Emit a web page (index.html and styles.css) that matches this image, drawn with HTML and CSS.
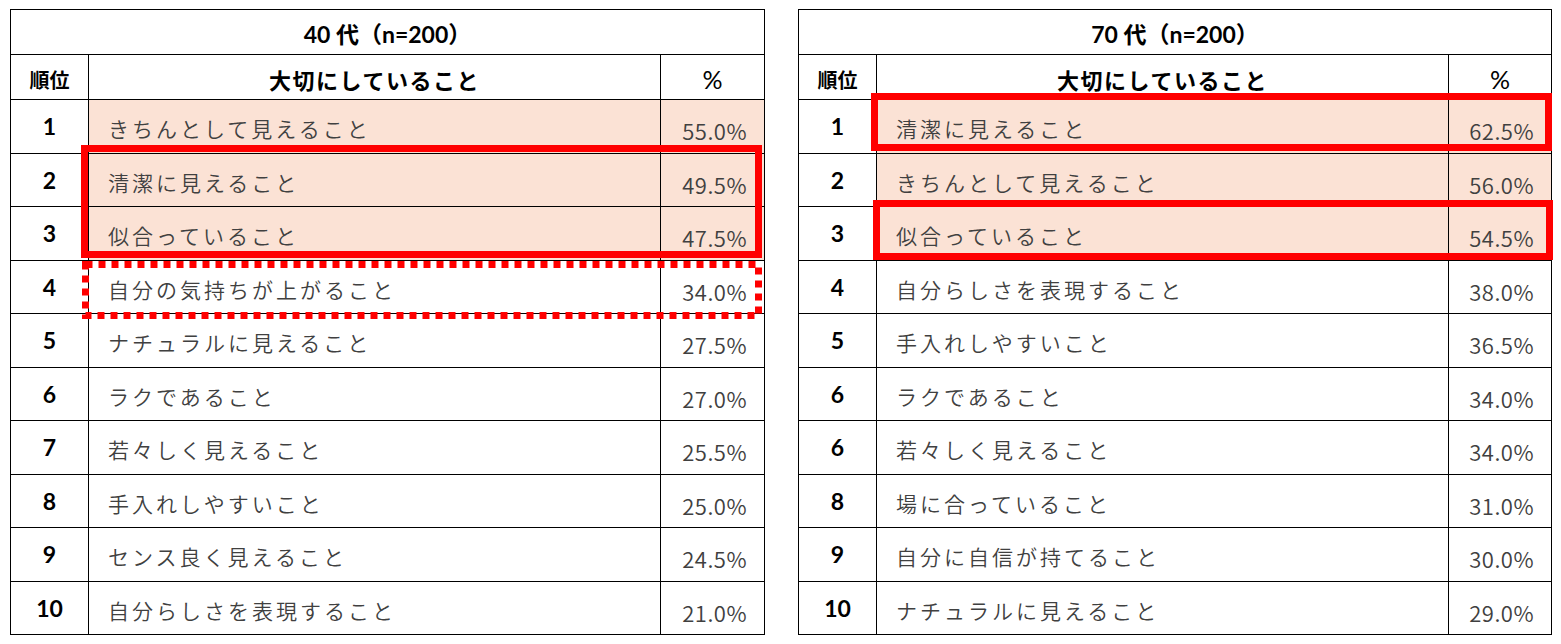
FILE: index.html
```html
<!DOCTYPE html>
<html lang="ja">
<head>
<meta charset="utf-8">
<title>大切にしていること</title>
<link rel="stylesheet" href="styles.css">
</head>
<body>
<div class="page">
  <div class="tables">
    <div class="tbl tbl-left">
      <div class="title">40 代（n=200）</div>
      <div class="hd hd-rank">順位</div>
      <div class="hd hd-item">大切にしていること</div>
      <div class="hd hd-pct">%</div>

      <div class="rank">1</div><div class="item hl">きちんとして見えること</div><div class="pct hl">55.0%</div>
      <div class="rank">2</div><div class="item hl">清潔に見えること</div><div class="pct hl">49.5%</div>
      <div class="rank">3</div><div class="item hl">似合っていること</div><div class="pct hl">47.5%</div>
      <div class="rank">4</div><div class="item">自分の気持ちが上がること</div><div class="pct">34.0%</div>
      <div class="rank">5</div><div class="item">ナチュラルに見えること</div><div class="pct">27.5%</div>
      <div class="rank">6</div><div class="item">ラクであること</div><div class="pct">27.0%</div>
      <div class="rank">7</div><div class="item">若々しく見えること</div><div class="pct">25.5%</div>
      <div class="rank">8</div><div class="item">手入れしやすいこと</div><div class="pct">25.0%</div>
      <div class="rank">9</div><div class="item">センス良く見えること</div><div class="pct">24.5%</div>
      <div class="rank">10</div><div class="item">自分らしさを表現すること</div><div class="pct">21.0%</div>
    </div>

    <div class="tbl tbl-right">
      <div class="title">70 代（n=200）</div>
      <div class="hd hd-rank">順位</div>
      <div class="hd hd-item">大切にしていること</div>
      <div class="hd hd-pct">%</div>

      <div class="rank">1</div><div class="item hl">清潔に見えること</div><div class="pct hl">62.5%</div>
      <div class="rank">2</div><div class="item hl">きちんとして見えること</div><div class="pct hl">56.0%</div>
      <div class="rank">3</div><div class="item hl">似合っていること</div><div class="pct hl">54.5%</div>
      <div class="rank">4</div><div class="item">自分らしさを表現すること</div><div class="pct">38.0%</div>
      <div class="rank">5</div><div class="item">手入れしやすいこと</div><div class="pct">36.5%</div>
      <div class="rank">6</div><div class="item">ラクであること</div><div class="pct">34.0%</div>
      <div class="rank">6</div><div class="item">若々しく見えること</div><div class="pct">34.0%</div>
      <div class="rank">8</div><div class="item">場に合っていること</div><div class="pct">31.0%</div>
      <div class="rank">9</div><div class="item">自分に自信が持てること</div><div class="pct">30.0%</div>
      <div class="rank">10</div><div class="item">ナチュラルに見えること</div><div class="pct">29.0%</div>
    </div>
  </div>

  <div class="mark mark-l23"></div>
  <svg class="mark-dash" width="680" height="58" viewBox="0 0 680 58">
    <rect x="3.5" y="3.5" width="673" height="51" fill="none" stroke="#ff0000" stroke-width="7" stroke-dasharray="7 6"/>
  </svg>
  <div class="mark mark-r1"></div>
  <div class="mark mark-r3"></div>
</div>
</body>
</html>
```

FILE: styles.css
```css
html, body {
  margin: 0;
  padding: 0;
  background: #ffffff;
}

.page {
  position: relative;
  width: 1561px;
  height: 644px;
  overflow: hidden;
}

.tables {
  display: flex;
  gap: 33px;
  padding: 9px 0 0 10px;
  align-items: flex-start;
}

.tbl {
  display: grid;
  grid-template-rows: 45px 45px repeat(10, 53.5px);
  border-left: 1px solid #000;
  border-top: 1px solid #000;
  font-family: "Noto Sans CJK JP", sans-serif;
}

.tbl-left {
  grid-template-columns: 78px 572px 104px;
}

.tbl-right {
  grid-template-columns: 78px 572px 103px;
}

.tbl > div {
  box-sizing: border-box;
  border-right: 1px solid #000;
  border-bottom: 1px solid #000;
  display: flex;
  align-items: center;
}

.title {
  grid-column: 1 / 4;
  justify-content: center;
  font-family: Lato, "Noto Sans CJK JP", sans-serif;
  font-weight: 700;
  font-size: 23px;
  color: #000;
  padding-top: 2px;
}

.hd {
  font-weight: 700;
  color: #000;
  justify-content: center;
}

.hd-rank {
  font-size: 20px;
  padding-top: 4px;
}

.hd-item {
  font-size: 22px;
  letter-spacing: 1.5px;
  padding-top: 4px;
}

.hd-pct {
  font-family: Lato, sans-serif;
  font-weight: 400;
  font-size: 25px;
  padding-top: 4px;
}

.rank {
  justify-content: center;
  font-family: Lato, sans-serif;
  font-weight: 700;
  font-size: 23px;
  color: #000;
}

.item {
  padding-left: 19px;
  padding-top: 4px;
  font-size: 21px;
  font-weight: 350;
  letter-spacing: 3px;
  color: #404040;
  white-space: nowrap;
}

.pct {
  justify-content: flex-end;
  padding-right: 17px;
  padding-top: 8px;
  font-size: 22px;
  font-weight: 350;
  letter-spacing: 0.5px;
  color: #404040;
}

.hl {
  background: #fbe2d5;
}

.mark {
  position: absolute;
  box-sizing: border-box;
  border: 7px solid #ff0000;
}

.mark-l23 {
  left: 81px;
  top: 145px;
  width: 681px;
  height: 113px;
}

.mark-dash {
  position: absolute;
  left: 82px;
  top: 261px;
}

.mark-r1 {
  left: 871px;
  top: 93px;
  width: 681px;
  height: 58px;
}

.mark-r3 {
  left: 873px;
  top: 200px;
  width: 680px;
  height: 60px;
}
```
